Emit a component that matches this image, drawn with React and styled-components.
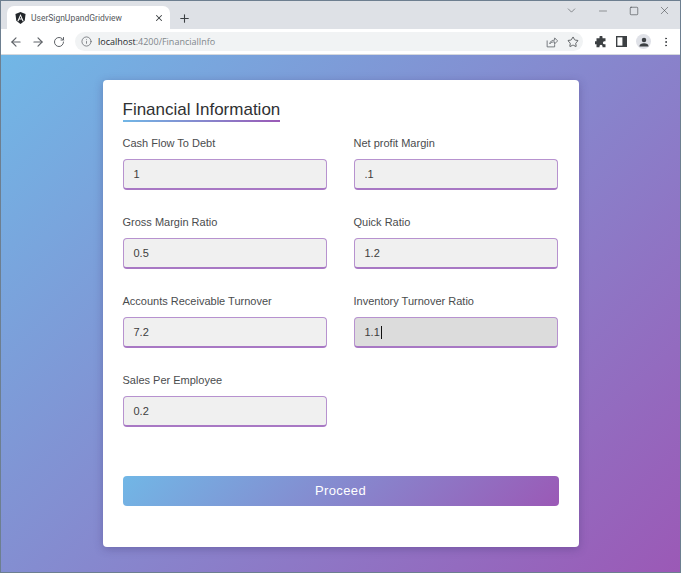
import React from "react";
import styled, { createGlobalStyle } from "styled-components";
import { ArrowLeft, ArrowRight, RotateCw, Info, Star, X, Plus, Minus, Square, ChevronDown, EllipsisVertical } from "lucide-react";

const GRADIENT = "linear-gradient(135deg, #71b7e6, #9b59b6)";

const Global = createGlobalStyle`
  html, body { margin: 0; padding: 0; height: 100%; }
  body { font-family: "Liberation Sans", Arial, sans-serif; }
`;

const Frame = styled.div`
  box-sizing: border-box;
  width: 681px;
  height: 573px;
  display: flex;
  flex-direction: column;
  border: 1px solid #6d7f90;
  overflow: hidden;
`;

const TabStrip = styled.div`
  height: 28px;
  background: #dee1e6;
  display: flex;
  align-items: flex-end;
  padding-left: 6px;
  flex: none;
`;

const Tab = styled.div`
  width: 163px;
  height: 23px;
  background: #fff;
  border-radius: 7px 7px 0 0;
  display: flex;
  align-items: center;
  padding: 0 6px 0 8px;
  box-sizing: border-box;
  gap: 5px;
`;

const TabTitle = styled.span`
  font-family: Roboto, sans-serif;
  font-size: 8.5px;
  color: #55585d;
  flex: 1;
  white-space: nowrap;
`;

const NewTab = styled.div`
  display: flex;
  margin: 0 0 4px 8px;
  color: #3c4043;
`;

const WindowButtons = styled.div`
  margin-left: auto;
  align-self: flex-start;
  display: flex;
  align-items: center;
  gap: 19.5px;
  padding: 3px 9px 0 0;
  color: #3c4043;
`;

const Toolbar = styled.div`
  height: 25px;
  background: #fff;
  border-bottom: 1px solid #d5d8dd;
  display: flex;
  align-items: center;
  flex: none;
  padding: 0 8px 0 8px;
  gap: 8px;
  color: #5f6368;
`;

const AddressBar = styled.div`
  flex: 1;
  height: 19px;
  margin-left: 2px;
  background: #f1f3f4;
  border-radius: 10px;
  display: flex;
  align-items: center;
  padding: 0 4px 0 6px;
  gap: 9px;
`;

const Url = styled.span`
  flex: 1;
  margin-left: -3px;
  font-family: "Open Sans", sans-serif;
  font-size: 9px;
  color: #80868b;
  b { font-weight: 400; color: #26292c; }
`;

const ToolIcons = styled.div`
  display: flex;
  align-items: center;
  gap: 9px;
  margin-left: 4px;
  color: #3c4043;
`;

const Avatar = styled.div`
  width: 15px;
  height: 15px;
  border-radius: 50%;
  background: #dfe1e7;
  display: flex;
  align-items: center;
  justify-content: center;
`;

const Page = styled.main`
  flex: 1;
  background: ${GRADIENT};
  display: flex;
  justify-content: center;
  align-items: flex-start;
  padding: 25px 0 0 0;
`;

const Card = styled.section`
  box-sizing: border-box;
  width: 476px;
  height: 467px;
  background: #fff;
  border-radius: 4px;
  padding: 20px;
  box-shadow: 0 2px 8px rgba(60, 50, 110, 0.35);
`;

const Title = styled.h1`
  position: relative;
  display: inline-block;
  margin: 0;
  height: 21px;
  font-size: 17px;
  line-height: 20px;
  font-weight: 400;
  color: #2f3133;
  &::after {
    content: "";
    position: absolute;
    left: 0;
    right: 0;
    bottom: -1px;
    height: 2px;
    background: linear-gradient(135deg, #71b7e6, #9b59b6);
  }
`;

const Fields = styled.div`
  display: grid;
  grid-template-columns: 204px 204px;
  column-gap: 27px;
  row-gap: 25px;
  margin-top: 15px;
`;

const Field = styled.div`
  display: flex;
  flex-direction: column;
  gap: 9px;
`;

const Label = styled.label`
  font-size: 11px;
  line-height: 14px;
  color: #4a4c4e;
`;

const Value = styled.div`
  box-sizing: border-box;
  height: 31px;
  border: 1px solid #b792cf;
  border-bottom: 2px solid #a878c4;
  border-radius: 4px;
  background: ${({ $focused }) => ($focused ? "#dcdcdc" : "#f0f0f0")};
  padding: 0 10px;
  display: flex;
  align-items: center;
  font-size: 11px;
  color: #3d3d3d;
`;

const Caret = styled.span`
  display: inline-block;
  width: 1px;
  height: 13px;
  margin-left: 1px;
  background: #111;
`;

const Proceed = styled.button`
  display: block;
  width: 100%;
  height: 30px;
  margin-top: 49px;
  padding: 0 0 2px;
  border: none;
  border-radius: 4px;
  background: ${GRADIENT};
  color: #fff;
  font-family: "Liberation Sans", Arial, sans-serif;
  font-size: 13px;
  letter-spacing: 0.4px;
`;

const fields = [
  ["Cash Flow To Debt", "1"],
  ["Net profit Margin", ".1"],
  ["Gross Margin Ratio", "0.5"],
  ["Quick Ratio", "1.2"],
  ["Accounts Receivable Turnover", "7.2"],
  ["Inventory Turnover Ratio", "1.1", true],
  ["Sales Per Employee", "0.2"],
];

const AngularLogo = () => (
  <svg width="11" height="12" viewBox="0 0 24 26">
    <path fill="#23272b" d="M12 0 1 4l1.800 15L12 26l9.200-7L23 4z" />
    <path fill="#fff" d="M12 4 5 20h2.700l1.400-3.600h5.800l1.400 3.600H19zm-2 10 2-5 2 5z" />
  </svg>
);

const ShareIcon = () => (
  <svg width="12" height="12" viewBox="0 0 16 16" fill="none" stroke="#5f6368" strokeWidth="1.1">
    <path d="M1.500 6v8.500h10V11" />
    <path d="M5 10.500c.5-3.500 3-5 6.500-5V2.500l4 4-4 4V7.800C8.500 7.800 6.500 8.500 5 10.500z" />
  </svg>
);

const PuzzleIcon = () => (
  <svg width="12" height="12" viewBox="0 0 16 16" fill="#3c4043">
    <path d="M6 1.500a2 2 0 0 1 4 0V3h4v4h-1.500a2 2 0 0 0 0 4H14v4h-4v-1.500a2 2 0 0 0-4 0V15H2v-4H.5a2 2 0 0 1 0-4H2V3h4z" />
  </svg>
);

const PanelIcon = () => (
  <svg width="11" height="11" viewBox="0 0 12 12">
    <path fill="#3c4043" d="M0 0h12v12H0z" />
    <path fill="#fff" d="M1.500 1.500h5.500v9H1.500z" />
  </svg>
);

const PersonIcon = () => (
  <svg width="10" height="10" viewBox="0 0 12 12" fill="#3c4043">
    <circle cx="6" cy="3.500" r="2.700" />
    <path d="M0.500 11.500c0-3 2.500-4 5.500-4s5.500 1 5.500 4z" />
  </svg>
);

export default function App() {
  return (
    <>
      <Global />
      <Frame>
        <TabStrip>
          <Tab>
            <AngularLogo />
            <TabTitle>UserSignUpandGridview</TabTitle>
            <X size={10} strokeWidth={2.5} color="#3c4043" />
          </Tab>
          <NewTab>
            <Plus size={13} strokeWidth={2} />
          </NewTab>
          <WindowButtons>
            <ChevronDown size={13} strokeWidth={1} />
            <Minus size={12} strokeWidth={1} />
            <Square size={10} strokeWidth={1.4} />
            <X size={13} strokeWidth={1} />
          </WindowButtons>
        </TabStrip>
        <Toolbar>
          <ArrowLeft size={14} strokeWidth={2} />
          <ArrowRight size={14} strokeWidth={2} />
          <RotateCw size={12} strokeWidth={2} />
          <AddressBar>
            <Info size={11} strokeWidth={1.6} />
            <Url>
              <b>localhost</b>:4200/FinancialInfo
            </Url>
            <ShareIcon />
            <Star size={12} strokeWidth={1.6} color="#3c4043" />
          </AddressBar>
          <ToolIcons>
            <PuzzleIcon />
            <PanelIcon />
            <Avatar>
              <PersonIcon />
            </Avatar>
            <EllipsisVertical size={12} strokeWidth={2} />
          </ToolIcons>
        </Toolbar>
        <Page>
          <Card>
            <Title>Financial Information</Title>
            <Fields>
              {fields.map(([label, value, focused]) => (
                <Field key={label}>
                  <Label>{label}</Label>
                  <Value $focused={focused}>
                    {value}
                    {focused && <Caret />}
                  </Value>
                </Field>
              ))}
            </Fields>
            <Proceed>Proceed</Proceed>
          </Card>
        </Page>
      </Frame>
    </>
  );
}
